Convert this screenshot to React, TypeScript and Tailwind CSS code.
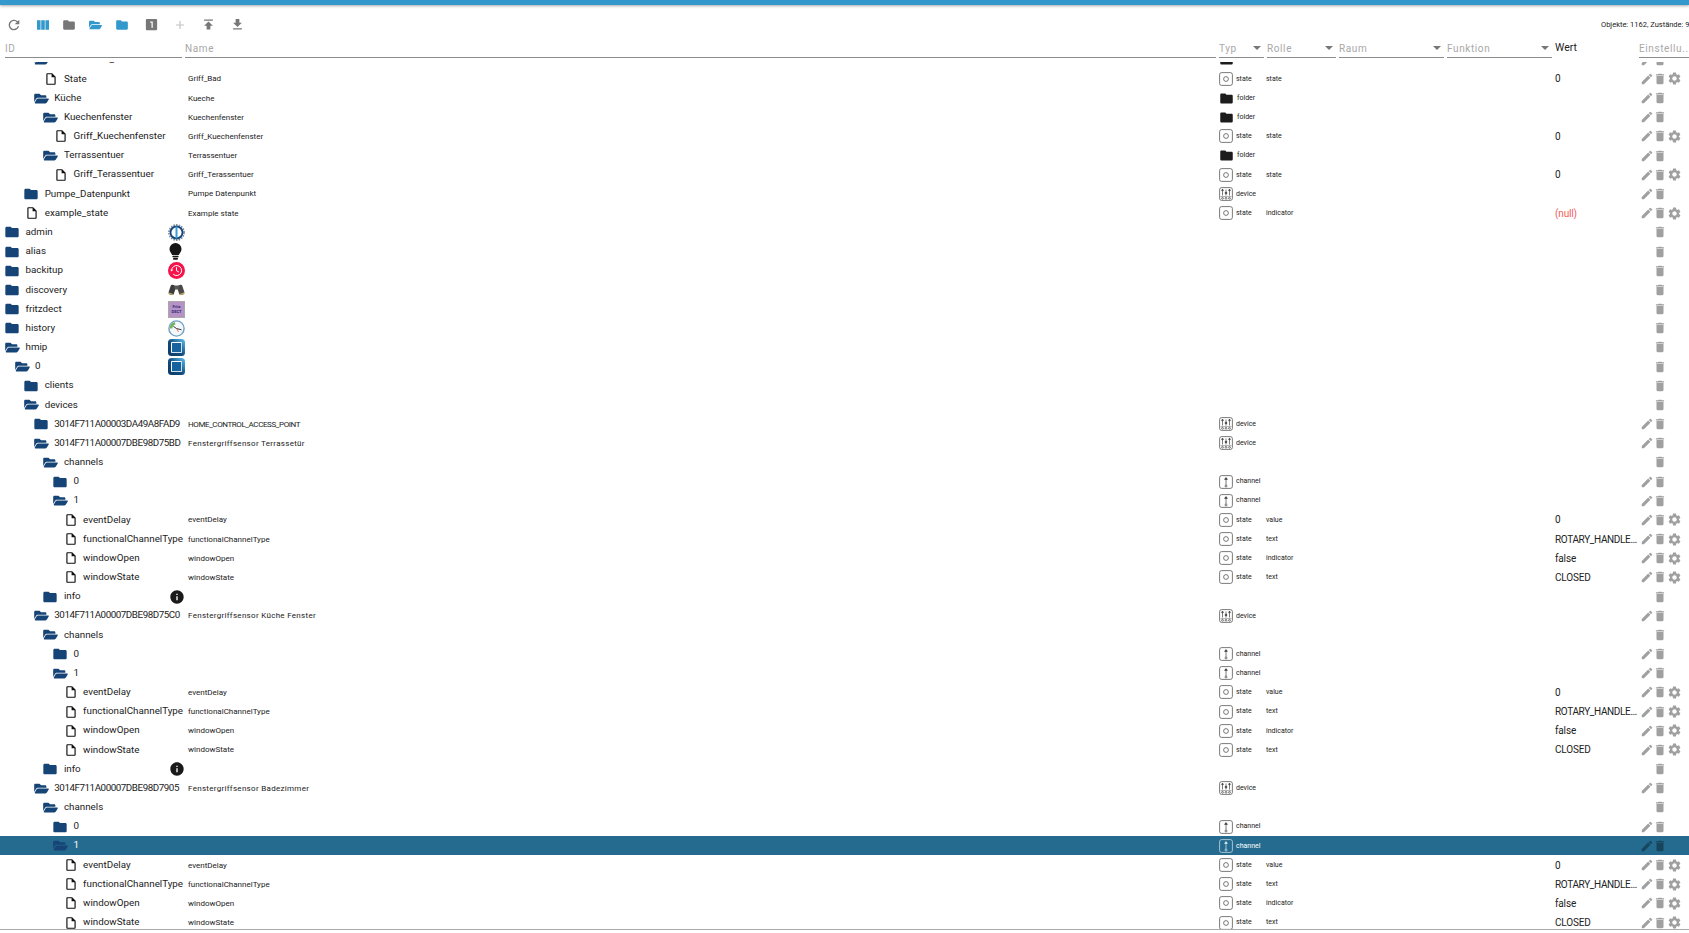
import {
  MdRefresh,
  MdViewColumn,
  MdFolder,
  MdLooksOne,
  MdAdd,
  MdPublish,
  MdGetApp,
  MdEdit,
  MdDelete,
  MdSettings,
  MdInfo,
  MdOutlineInsertDriveFile,
} from "react-icons/md";
import { FaFolderOpen } from "react-icons/fa";

type Kind = "closed" | "open" | "file";
type ObjType = "state" | "folder" | "device" | "channel";

interface Row {
  id: string;
  level: number;
  kind: Kind;
  name?: string;
  type?: ObjType;
  role?: string;
  value?: string;
  logo?: string;
  selected?: boolean;
}

function channelRows(level: number): Row[] {
  return [
    { id: "eventDelay", level, kind: "file", name: "eventDelay", type: "state", role: "value", value: "0" },
    { id: "functionalChannelType", level, kind: "file", name: "functionalChannelType", type: "state", role: "text", value: "ROTARY_HANDLE_CHANNEL" },
    { id: "windowOpen", level, kind: "file", name: "windowOpen", type: "state", role: "indicator", value: "false" },
    { id: "windowState", level, kind: "file", name: "windowState", type: "state", role: "text", value: "CLOSED" },
  ];
}

const rows: Row[] = [
  { id: "Badezimmer_Bad", level: 3, kind: "open", name: "Badezimmer Bad", type: "folder" },
  { id: "State", level: 4, kind: "file", name: "Griff_Bad", type: "state", role: "state", value: "0" },
  { id: "Küche", level: 3, kind: "open", name: "Kueche", type: "folder" },
  { id: "Kuechenfenster", level: 4, kind: "open", name: "Kuechenfenster", type: "folder" },
  { id: "Griff_Kuechenfenster", level: 5, kind: "file", name: "Griff_Kuechenfenster", type: "state", role: "state", value: "0" },
  { id: "Terrassentuer", level: 4, kind: "open", name: "Terrassentuer", type: "folder" },
  { id: "Griff_Terassentuer", level: 5, kind: "file", name: "Griff_Terassentuer", type: "state", role: "state", value: "0" },
  { id: "Pumpe_Datenpunkt", level: 2, kind: "closed", name: "Pumpe Datenpunkt", type: "device" },
  { id: "example_state", level: 2, kind: "file", name: "Example state", type: "state", role: "indicator", value: "(null)" },
  { id: "admin", level: 0, kind: "closed", logo: "admin" },
  { id: "alias", level: 0, kind: "closed", logo: "alias" },
  { id: "backitup", level: 0, kind: "closed", logo: "backitup" },
  { id: "discovery", level: 0, kind: "closed", logo: "discovery" },
  { id: "fritzdect", level: 0, kind: "closed", logo: "fritzdect" },
  { id: "history", level: 0, kind: "closed", logo: "history" },
  { id: "hmip", level: 0, kind: "open", logo: "hmip" },
  { id: "0", level: 1, kind: "open", logo: "hmip" },
  { id: "clients", level: 2, kind: "closed" },
  { id: "devices", level: 2, kind: "open" },
  { id: "3014F711A00003DA49A8FAD9", level: 3, kind: "closed", name: "HOME_CONTROL_ACCESS_POINT", type: "device" },
  { id: "3014F711A00007DBE98D75BD", level: 3, kind: "open", name: "Fenstergriffsensor Terrassetür", type: "device" },
  { id: "channels", level: 4, kind: "open" },
  { id: "0", level: 5, kind: "closed", type: "channel" },
  { id: "1", level: 5, kind: "open", type: "channel" },
  ...channelRows(6),
  { id: "info", level: 4, kind: "closed", logo: "info" },
  { id: "3014F711A00007DBE98D75C0", level: 3, kind: "open", name: "Fenstergriffsensor Küche Fenster", type: "device" },
  { id: "channels", level: 4, kind: "open" },
  { id: "0", level: 5, kind: "closed", type: "channel" },
  { id: "1", level: 5, kind: "open", type: "channel" },
  ...channelRows(6),
  { id: "info", level: 4, kind: "closed", logo: "info" },
  { id: "3014F711A00007DBE98D7905", level: 3, kind: "open", name: "Fenstergriffsensor Badezimmer", type: "device" },
  { id: "channels", level: 4, kind: "open" },
  { id: "0", level: 5, kind: "closed", type: "channel" },
  { id: "1", level: 5, kind: "open", type: "channel", selected: true },
  ...channelRows(6),
];

function TypeIcon({ type }: { type: ObjType }) {
  if (type === "folder") {
    return <MdFolder className="h-[15px] w-[15px] text-[#1c1c1c]" />;
  }
  return (
    <svg viewBox="0 0 14 14" className="h-[14px] w-[14px]" fill="none" stroke="currentColor" strokeWidth="0.7" opacity="0.85">
      <rect x="0.6" y="0.6" width="12.8" height="12.8" rx="2" />
      {type === "state" && <circle cx="7" cy="7" r="2.4" />}
      {type === "channel" && (
        <>
          <path d="M7 3v7" />
          <path d="M5.6 4.4 7 2.6l1.4 1.8z" fill="currentColor" />
          <circle cx="7" cy="11" r="1" />
        </>
      )}
      {type === "device" && (
        <>
          <path d="M3.5 2.5v6M7 2.5v6M10.5 2.5v6" />
          <path d="M2.6 3.6 3.5 2l.9 1.6zM9.6 3.6l.9-1.6.9 1.6z" fill="currentColor" />
          <circle cx="7" cy="6" r="0.9" fill="currentColor" />
          <path d="M1.5 9.5h11" strokeWidth="0.4" />
          <circle cx="3.5" cy="11.3" r="0.9" />
          <circle cx="7" cy="11.3" r="0.9" />
          <circle cx="10.5" cy="11.3" r="0.9" />
        </>
      )}
    </svg>
  );
}

function Logo({ name }: { name: string }) {
  if (name === "admin") {
    return (
      <svg viewBox="0 0 17 17" className="h-[17px] w-[17px]">
        <circle cx="8.5" cy="8.5" r="7.6" fill="none" stroke="#7f8c9a" strokeWidth="1.6" strokeDasharray="1.6 1.1" />
        <circle cx="8.5" cy="8.5" r="6" fill="#fff" stroke="#14447a" strokeWidth="1.8" />
        <rect x="7.5" y="2.5" width="2" height="12" fill="#3c9ad6" />
      </svg>
    );
  }
  if (name === "alias") {
    return (
      <svg viewBox="0 0 13 17" className="mr-[3px] h-[17px] w-[13px]" fill="#161616">
        <path d="M6.5 0a6 6 0 0 1 6 6c0 2.6-1.8 3.8-2.6 6H3.1C2.3 9.8.5 8.6.5 6a6 6 0 0 1 6-6z" />
        <rect x="3.4" y="12.7" width="6.2" height="1.6" rx="0.6" />
        <rect x="4" y="14.8" width="5" height="2" rx="1" />
      </svg>
    );
  }
  if (name === "backitup") {
    return (
      <svg viewBox="0 0 17 17" className="h-[17px] w-[17px]">
        <circle cx="8.5" cy="8.5" r="8.5" fill="#f5134c" />
        <path d="M3.6 8.5a5 5 0 1 1 1.6 3.7" fill="none" stroke="#fff" strokeWidth="1" />
        <path d="M8.5 5.2v3.5l2.4 1.4" fill="none" stroke="#fff" strokeWidth="1" />
        <path d="M2.2 7.8h2.8L3.6 9.6z" fill="#fff" />
      </svg>
    );
  }
  if (name === "discovery") {
    return (
      <svg viewBox="0 0 17 15" className="h-[15px] w-[17px]">
        <g transform="rotate(18 4.5 8)">
          <rect x="1.5" y="3" width="5.5" height="10" rx="1.8" fill="#3d3d3d" />
          <rect x="2" y="11.5" width="4.5" height="1.5" fill="#b9a163" />
        </g>
        <g transform="rotate(-18 12.5 8)">
          <rect x="10" y="3" width="5.5" height="10" rx="1.8" fill="#4a4a4a" />
          <rect x="10.5" y="11.5" width="4.5" height="1.5" fill="#c4a95f" />
        </g>
        <rect x="6.5" y="3.5" width="4" height="4" rx="1" fill="#5a5a5a" />
      </svg>
    );
  }
  if (name === "fritzdect") {
    return (
      <div className="flex h-[17px] w-[17px] flex-col items-center justify-center border border-[#a9a9a9] bg-[#b792c4] text-[4px] leading-[5px] font-bold text-[#2a2a7a]">
        <span>Fritz</span>
        <span>DECT</span>
      </div>
    );
  }
  if (name === "history") {
    return (
      <svg viewBox="0 0 17 17" className="h-[17px] w-[17px]">
        <circle cx="8.5" cy="8.5" r="7.6" fill="#f4f8fb" stroke="#6f9fc4" strokeWidth="1.4" />
        <path d="M1.8 8.5a6.7 6.7 0 0 1 5-6.5l.6 2.4a4.2 4.2 0 0 0-3 4.1z" fill="#6fb35a" />
        <path d="M8.5 8.5 5.4 6.4M8.5 8.5l5 1.3" stroke="#222" strokeWidth="0.9" />
        <path d="M8.5 8.5l2 3.4" stroke="#d33" strokeWidth="0.7" />
      </svg>
    );
  }
  if (name === "hmip") {
    return (
      <svg viewBox="0 0 17 17" className="h-[17px] w-[17px]">
        <defs>
          <linearGradient id="hmipRim" x1="1" y1="0" x2="0" y2="1">
            <stop offset="0" stopColor="#5fc0f0" />
            <stop offset="0.55" stopColor="#0f4a7d" />
            <stop offset="1" stopColor="#0b3a63" />
          </linearGradient>
        </defs>
        <rect width="17" height="17" rx="3.5" fill="url(#hmipRim)" />
        <rect x="3" y="3" width="11" height="11" rx="1" fill="#fff" />
        <rect x="4" y="4" width="9.2" height="9.2" fill="#17639f" />
      </svg>
    );
  }
  return <MdInfo className="h-[16px] w-[16px] text-[#1a1a1a]" />;
}

function TreeIcon({ kind }: { kind: Kind }) {
  if (kind === "file") {
    return <MdOutlineInsertDriveFile className="ml-[1px] h-[14px] w-[14px] text-[#111]" />;
  }
  if (kind === "open") {
    return <FaFolderOpen className="h-[13px] w-[15px] text-[#164477]" />;
  }
  return <MdFolder className="-ml-[1px] h-[16px] w-[16px] text-[#164477]" />;
}

function Actions({ row }: { row: Row }) {
  const tone = row.selected ? "text-[#17455c]" : "text-[#a0a0a0]";
  const hasEdit = Boolean(row.type);
  return (
    <div className={`flex w-[49px] shrink-0 items-center ${tone}`}>
      <div className="w-[13px] shrink-0">{hasEdit && <MdEdit className="h-[14px] w-[14px]" />}</div>
      <MdDelete className="h-[14px] w-[14px] shrink-0" />
      {row.type === "state" && <MdSettings className="h-[15px] w-[15px] shrink-0" />}
    </div>
  );
}

function nameTracking(name?: string) {
  if (!name) return "";
  if (name.startsWith("HOME_")) return "tracking-[-0.4px]";
  if (name.startsWith("Fenster")) return "tracking-[0.3px]";
  return "";
}

function TreeRow({ row }: { row: Row }) {
  const dim = row.selected ? "bg-[#246b8f] text-white" : "text-[#222]";
  const long = (row.value ?? "").length > 10;
  return (
    <div className={`flex h-[19.18px] shrink-0 items-center ${dim}`}>
      <div
        className="flex w-[185px] shrink-0 items-center text-[9.8px] whitespace-nowrap"
        style={{ paddingLeft: 5 + row.level * 9.6 }}
      >
        <div className="flex w-[20.5px] shrink-0 items-center">
          <TreeIcon kind={row.kind} />
        </div>
        <span className={row.id.startsWith("3014") ? "tracking-[-0.45px]" : ""}>{row.id}</span>
        {row.logo && (
          <div className="ml-auto flex w-[17px] shrink-0 justify-center">
            <Logo name={row.logo} />
          </div>
        )}
      </div>
      <div className={`w-[1034px] shrink-0 truncate pt-[1px] pl-[3px] text-[8px] ${nameTracking(row.name)}`}>{row.name}</div>
      <div className="flex w-[47px] shrink-0 items-center gap-[3px] text-[7px]">
        {row.type && (
          <>
            <TypeIcon type={row.type} />
            <span>{row.type}</span>
          </>
        )}
      </div>
      <div className="w-[289px] shrink-0 text-[7px]">{row.role}</div>
      <div
        className={`w-[85px] shrink-0 truncate pr-[1px] text-[10px] ${long ? "tracking-[-0.35px]" : "tracking-[-0.15px]"} ${
          row.value === "(null)" ? "text-[#f25c5c]" : ""
        }`}
      >
        {row.value}
      </div>
      <Actions row={row} />
    </div>
  );
}

function HeaderCell({ label, width, caret }: { label: string; width: string; caret?: boolean }) {
  return (
    <div className={`flex h-[19px] shrink-0 items-center justify-between border-b border-[#8c8c8c] text-[10px] tracking-[0.6px] text-[#a8a8a8] ${width}`}>
      <span className="truncate">{label}</span>
      {caret && <span className="mr-[3px] h-0 w-0 border-x-[4px] border-t-[4px] border-x-transparent border-t-[#777]" />}
    </div>
  );
}

export default function App() {
  return (
    <div className="flex h-screen w-full flex-col overflow-hidden bg-white font-['Roboto',sans-serif]">
      <div className="h-[5px] shrink-0 bg-[#3399cc] shadow-[0_1px_3px_rgba(0,0,0,0.35)]" />

      <div className="flex h-[34px] shrink-0 items-center pt-[5px] pl-[6px]">
        <MdRefresh className="h-[16px] w-[16px] text-[#777]" />
        <MdViewColumn className="ml-[13px] h-[16px] w-[16px] text-[#3399cc]" />
        <MdFolder className="ml-[11px] h-[14px] w-[14px] text-[#777]" />
        <FaFolderOpen className="ml-[12.5px] h-[12px] w-[13px] text-[#3399cc]" />
        <MdFolder className="ml-[13.5px] h-[14px] w-[14px] text-[#3399cc]" />
        <MdLooksOne className="ml-[14.5px] h-[15px] w-[15px] text-[#777]" />
        <MdAdd className="ml-[14.5px] h-[14px] w-[14px] text-[#c4c4c4]" />
        <MdPublish className="ml-[13.5px] h-[15px] w-[15px] text-[#777]" />
        <MdGetApp className="ml-[14px] h-[15px] w-[15px] text-[#777]" />
        <div className="ml-auto w-[88px] shrink-0 overflow-hidden text-[7.5px] whitespace-nowrap text-[#222]">
          Objekte: 1162, Zustände: 987
        </div>
      </div>

      <div className="flex shrink-0 gap-[3px] pl-[5px]">
        <HeaderCell label="ID" width="w-[177px]" />
        <HeaderCell label="Name" width="w-[1031px]" />
        <HeaderCell label="Typ" width="w-[45px]" caret />
        <HeaderCell label="Rolle" width="w-[69px]" caret />
        <HeaderCell label="Raum" width="w-[105px]" caret />
        <HeaderCell label="Funktion" width="w-[105px]" caret />
        <div className="flex h-[19px] w-[81px] shrink-0 items-start pt-[1px] text-[10.5px] text-[#222]">Wert</div>
        <div className="flex h-[19px] w-[50px] shrink-0 items-center overflow-hidden border-b border-[#8c8c8c] text-[10px] tracking-[0.6px] whitespace-nowrap text-[#a8a8a8]">
          Einstellu...
        </div>
      </div>

      <div className="mt-[4px] mb-[3px] flex min-h-0 flex-1 flex-col overflow-hidden border-b border-[#aaa]">
        <div className="-mt-[11.8px] flex flex-col">
          {rows.map((row, i) => (
            <TreeRow key={i} row={row} />
          ))}
        </div>
      </div>
    </div>
  );
}
